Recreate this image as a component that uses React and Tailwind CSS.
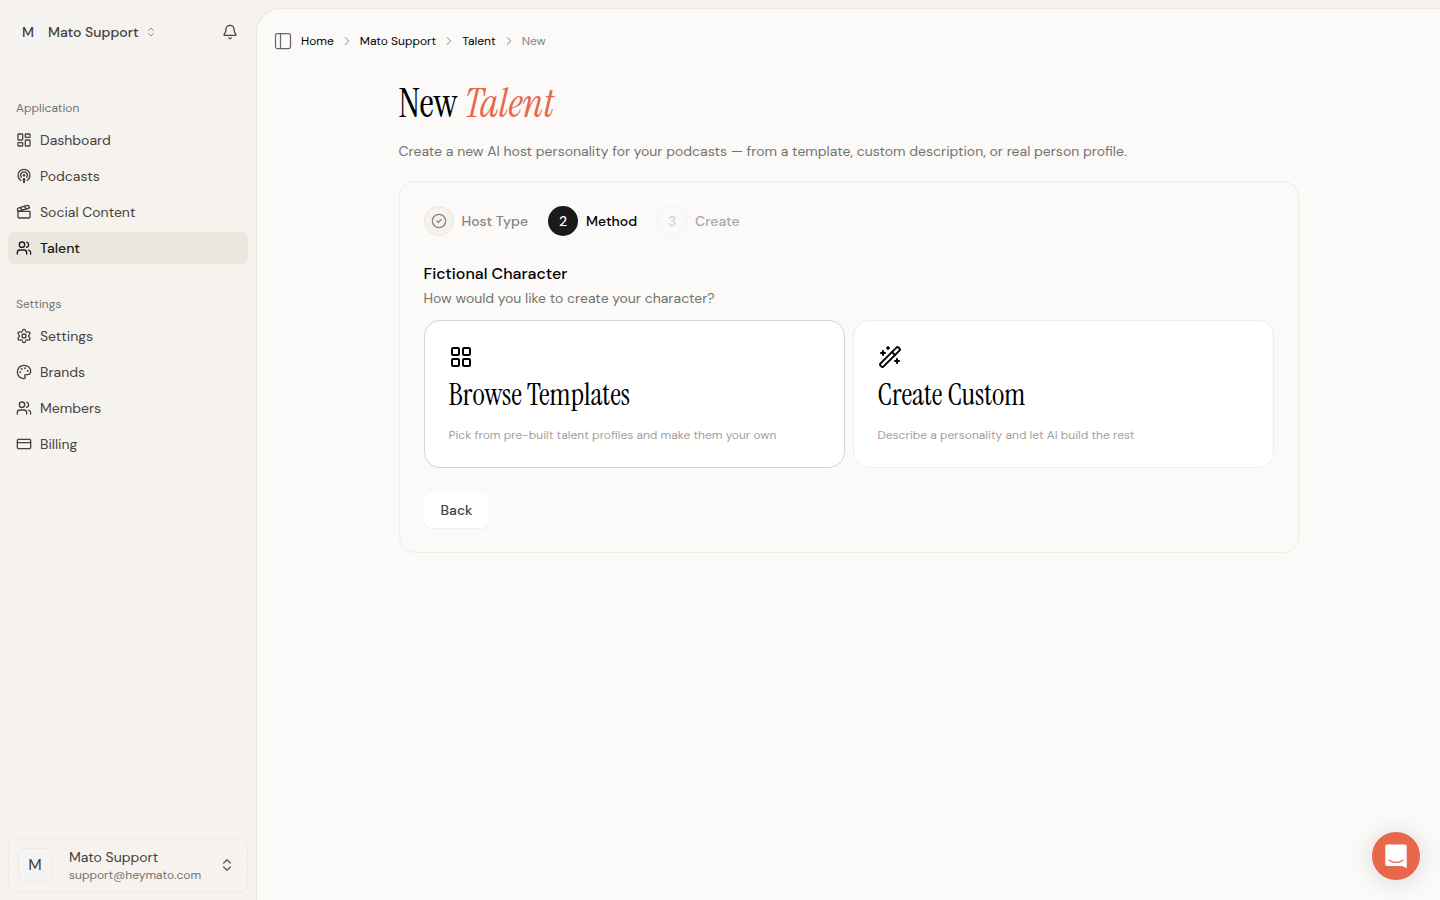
import React from 'react';
import {
  Bell,
  ChevronRight,
  ChevronsUpDown,
  CircleCheck,
  Clapperboard,
  CreditCard,
  LayoutDashboard,
  LayoutGrid,
  Palette,
  PanelLeft,
  Podcast,
  Settings,
  Users,
  WandSparkles,
} from 'lucide-react';

const navGroups = [
  {
    label: 'Application',
    items: [
      { name: 'Dashboard', icon: LayoutDashboard },
      { name: 'Podcasts', icon: Podcast },
      { name: 'Social Content', icon: Clapperboard },
      { name: 'Talent', icon: Users, active: true },
    ],
  },
  {
    label: 'Settings',
    items: [
      { name: 'Settings', icon: Settings },
      { name: 'Brands', icon: Palette },
      { name: 'Members', icon: Users },
      { name: 'Billing', icon: CreditCard },
    ],
  },
];

const crumbs = ['Home', 'Mato Support', 'Talent'];

const methods = [
  {
    title: 'Browse Templates',
    text: 'Pick from pre-built talent profiles and make them your own',
    icon: LayoutGrid,
    selected: true,
  },
  {
    title: 'Create Custom',
    text: 'Describe a personality and let AI build the rest',
    icon: WandSparkles,
  },
];

const Sidebar = () => (
  <aside className="sticky top-0 flex h-screen w-64 shrink-0 flex-col text-[#424240]">
    <div className="flex h-16 items-center justify-between px-4">
      <button type="button" className="flex items-center gap-1.5 text-sm font-medium">
        <span className="flex items-center gap-2">
          <span className="flex size-6 items-center justify-center rounded-md bg-[#f4f4f4]">M</span>
          Mato Support
        </span>
        <ChevronsUpDown className="size-3 text-[#8f8e8b]" />
      </button>
      <button type="button" aria-label="Notifications" className="p-0.5">
        <Bell className="size-4" />
      </button>
    </div>

    <nav className="flex flex-1 flex-col gap-6 px-2 pt-7">
      {navGroups.map((group) => (
        <div key={group.label}>
          <h2 className="flex h-8 items-center px-2 text-xs text-[#73726f]">{group.label}</h2>
          <ul className="flex flex-col gap-1">
            {group.items.map(({ name, icon: Icon, active }) => (
              <li key={name}>
                <a
                  href="#"
                  className={
                    active
                      ? 'flex h-8 items-center gap-2 rounded-lg bg-[#ebe7df] px-2 text-sm font-medium text-[#1a1a1a]'
                      : 'flex h-8 items-center gap-2 rounded-lg px-2 text-sm'
                  }
                >
                  <Icon className="size-4" />
                  {name}
                </a>
              </li>
            ))}
          </ul>
        </div>
      ))}
    </nav>

    <div className="p-2">
      <button
        type="button"
        className="flex w-full items-center gap-4 rounded-lg border border-dashed border-[#e9e5dc] p-2 text-left"
      >
        <span className="m-px flex size-[34px] shrink-0 items-center justify-center rounded-lg border border-[#ebe9e2] bg-[#f4f4f4]">M</span>
        <span className="flex flex-1 flex-col">
          <span className="text-sm leading-5">Mato Support</span>
          <span className="text-xs leading-4 text-[#73726f]">support@heymato.com</span>
        </span>
        <ChevronsUpDown className="mr-1 size-4 shrink-0 text-[#5c5b59]" />
      </button>
    </div>
  </aside>
);

const Breadcrumb = () => (
  <header className="flex h-16 items-center gap-2 px-4">
    <button type="button" aria-label="Toggle sidebar" className="text-[#696865]">
      <PanelLeft className="size-5" strokeWidth={1.5} />
    </button>
    <nav aria-label="Breadcrumb">
      <ol className="flex items-center gap-1.5 text-xs">
        {crumbs.map((crumb) => (
          <li key={crumb} className="flex items-center gap-1.5">
            <a href="#" className="text-black">{crumb}</a>
            <ChevronRight className="size-3.5 text-[#73726f]" strokeWidth={1.5} />
          </li>
        ))}
        <li aria-current="page" className="text-[#858482]">New</li>
      </ol>
    </nav>
  </header>
);

const Steps = () => (
  <ol className="flex items-center gap-5 text-sm font-medium">
    <li className="flex items-center gap-2 text-[#858482]">
      <span className="flex size-[30px] items-center justify-center rounded-full border border-[#ebe7df] bg-[#f6f3ee]">
        <CircleCheck className="size-4" />
      </span>
      Host Type
    </li>
    <li aria-current="step" className="flex items-center gap-2 text-black">
      <span className="flex size-[30px] items-center justify-center rounded-full bg-[#1a1a1a] text-white">2</span>
      Method
    </li>
    <li className="flex items-center gap-2 text-[#a9a8a6]">
      <span className="flex size-[30px] items-center justify-center rounded-full border border-[#f4f2ee] font-normal text-[#cfcecb]">3</span>
      Create
    </li>
  </ol>
);

const MethodCard = ({ title, text, icon: Icon, selected }) => (
  <button
    type="button"
    className={
      selected
        ? 'flex flex-col items-start rounded-2xl border border-[#d3d3d3] bg-white p-6 text-left'
        : 'flex flex-col items-start rounded-2xl border border-[#efece4] bg-white p-6 text-left'
    }
  >
    <Icon className="size-6 text-black" />
    <span className="mt-2 font-['Instrument_Serif','Liberation_Serif',serif] text-3xl leading-9 text-black">{title}</span>
    <span className="mt-3.5 text-xs leading-4 text-[#a1a1a0]">{text}</span>
  </button>
);

export default function App() {
  return (
    <div className="flex min-h-screen bg-[#f6f3ee] font-['DM_Sans','Open_Sans',sans-serif] text-[#424240]">
      <Sidebar />

      <div className="flex min-w-0 flex-1 flex-col pt-2">
        <main className="flex-1 rounded-tl-3xl border-t border-l border-[#ebe7df] bg-[#fbfaf8]">
          <Breadcrumb />

          <div className="mx-auto max-w-[900px]">
            <h1 className="font-['Instrument_Serif','Liberation_Serif',serif] text-[40px] leading-[60px] text-black">
              New <em className="text-[#e8664a]">Talent</em>
            </h1>
            <p className="mt-2 text-sm leading-5 text-[#73726f]">
              Create a new AI host personality for your podcasts — from a template, custom description, or real person profile.
            </p>

            <section className="mt-5 rounded-2xl border border-[#efece4] p-6">
              <Steps />

              <h2 className="mt-6 text-base leading-7 font-medium text-black">Fictional Character</h2>
              <p className="text-sm leading-5 text-[#73726f]">How would you like to create your character?</p>

              <div className="mt-3 grid grid-cols-2 gap-2">
                {methods.map((method) => (
                  <MethodCard key={method.title} {...method} />
                ))}
              </div>

              <button
                type="button"
                className="mt-6 h-9 rounded-lg border border-[#fdfdfc] bg-white px-4 text-sm font-medium shadow-xs"
              >
                Back
              </button>
            </section>
          </div>
        </main>
      </div>

      <button
        type="button"
        aria-label="Open chat"
        className="fixed right-5 bottom-5 flex size-12 items-center justify-center rounded-full bg-[#e8664a] shadow-[0_2px_24px_rgba(0,0,0,0.14)]"
      >
        <svg viewBox="0 0 24 26" className="h-[26px] w-6" fill="none">
          <path d="M3 1.500h18a1.700 1.700 0 0 1 1.700 1.700V25.200l-4.700-2.200H3a1.700 1.700 0 0 1-1.700-1.700V3.200A1.700 1.700 0 0 1 3 1.500z" fill="#fff" />
          <path d="M5 17.200c4 3 10 3 14 0" stroke="#e8664a" strokeWidth="1.300" strokeLinecap="round" />
        </svg>
      </button>
    </div>
  );
}
